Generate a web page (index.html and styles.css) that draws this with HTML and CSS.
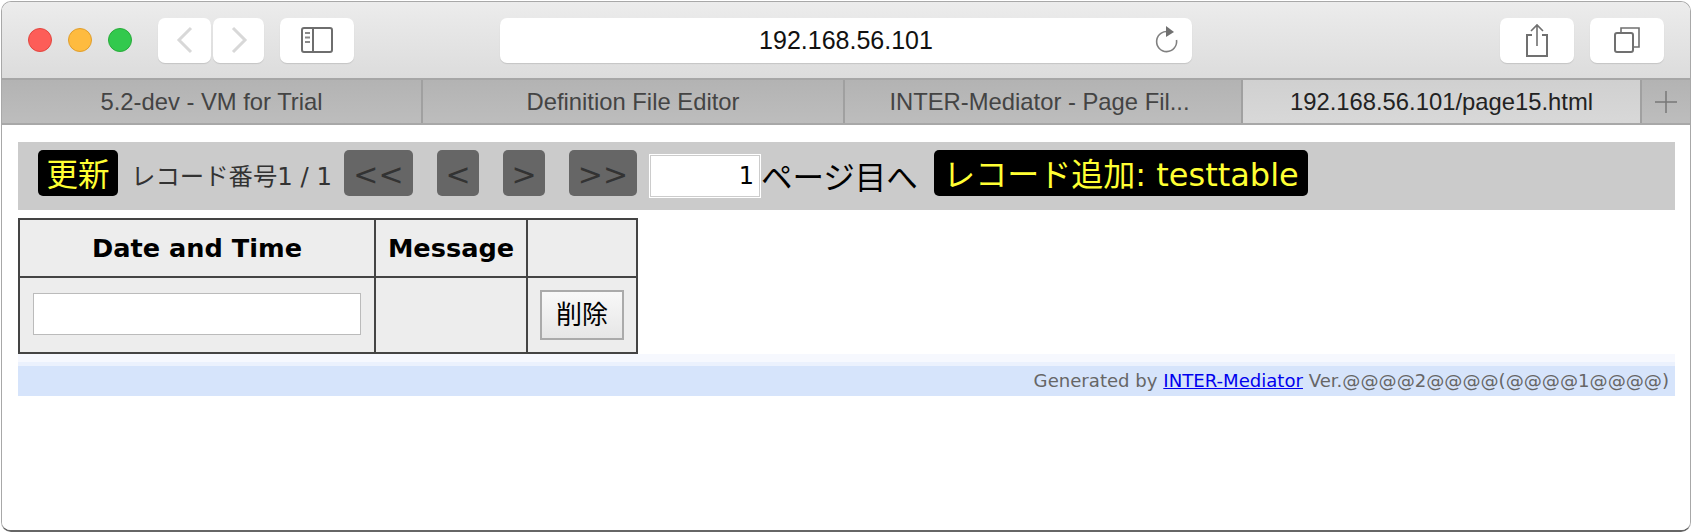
FILE: index.html
```html
<!DOCTYPE html>
<html lang="ja">

<head>
    <meta charset="UTF-8">
    <meta name="viewport" content="width=device-width, initial-scale=1.0">
    <title>192.168.56.101/page15.html</title>
    <link rel="stylesheet" href="styles.css">
</head>

<body>
    <div class="window">
        <div class="toolbar">
            <div class="lights">
                <span class="light red"></span>
                <span class="light yellow"></span>
                <span class="light green"></span>
            </div>
            <div class="tool back">
                <svg width="24" height="28" viewBox="0 0 24 28"><path d="M18 2 L6 14 L18 26" fill="none" stroke="#d8d8d8" stroke-width="3"/></svg>
            </div>
            <div class="tool forward">
                <svg width="24" height="28" viewBox="0 0 24 28"><path d="M6 2 L18 14 L6 26" fill="none" stroke="#d8d8d8" stroke-width="3"/></svg>
            </div>
            <div class="tool sidebar">
                <svg width="32" height="26" viewBox="0 0 32 26">
                    <rect x="1" y="1" width="30" height="24" rx="2" fill="none" stroke="#6e6e6e" stroke-width="2"/>
                    <path d="M12 1 V25" stroke="#6e6e6e" stroke-width="2"/>
                    <path d="M4 6 H9 M4 10.500 H9 M4 15 H9" stroke="#8a8a8a" stroke-width="2"/>
                </svg>
            </div>
            <div class="address">
                <span class="url">192.168.56.101</span>
                <svg class="reload" width="24" height="30" viewBox="0 0 24 30">
                    <path d="M14.500 7 A10 10 0 1 0 21.500 15" fill="none" stroke="#808080" stroke-width="1.600"/>
                    <path d="M11 1 L19 7 L11 12 Z" fill="#707070"/>
                </svg>
            </div>
            <div class="tool share">
                <svg width="24" height="34" viewBox="0 0 24 34">
                    <path d="M7 12 H2 V33 H22 V12 H17" fill="none" stroke="#707070" stroke-width="2"/>
                    <path d="M12 23 V2 M6 8 L12 2 L18 8" fill="none" stroke="#707070" stroke-width="1.600"/>
                </svg>
            </div>
            <div class="tool tabs-btn">
                <svg width="26" height="26" viewBox="0 0 26 26">
                    <rect x="1" y="6" width="18" height="19" rx="2" fill="none" stroke="#707070" stroke-width="2"/>
                    <path d="M7 6 V1 H25 V20 H19" fill="none" stroke="#707070" stroke-width="1.600"/>
                </svg>
            </div>
        </div>

        <div class="tabbar">
            <div class="tab">5.2-dev - VM for Trial</div>
            <div class="tab">Definition File Editor</div>
            <div class="tab tab-long">INTER-Mediator - Page Fil...</div>
            <div class="tab active">192.168.56.101/page15.html</div>
            <div class="tab plus">
                <svg width="22" height="22" viewBox="0 0 22 22"><path d="M11 0 V22 M0 11 H22" stroke="#777" stroke-width="1.500"/></svg>
            </div>
        </div>

        <div class="content">
            <div class="navi">
                <span class="btn-black update">更新</span>
                <span class="record">レコード番号1 / 1</span>
                <span class="btn-page first">&lt;&lt;</span>
                <span class="btn-page prev">&lt;</span>
                <span class="btn-page next">&gt;</span>
                <span class="btn-page last">&gt;&gt;</span>
                <input class="page-input" type="text" value="1">
                <span class="page-label">ページ目へ</span>
                <span class="btn-black add">レコード追加: testtable</span>
            </div>

            <table class="records">
                <thead>
                    <tr>
                        <th class="col-date">Date and Time</th>
                        <th class="col-message">Message</th>
                        <th class="col-action"></th>
                    </tr>
                </thead>
                <tbody>
                    <tr>
                        <td><input class="date-input" type="text"></td>
                        <td></td>
                        <td><button class="delete">削除</button></td>
                    </tr>
                </tbody>
            </table>

            <div class="footer">Generated by <a href="#">INTER-Mediator</a> Ver.@@@@2@@@@(@@@@1@@@@)</div>
        </div>
    </div>
</body>

</html>
```

FILE: styles.css
```css
* {
    margin: 0;
    padding: 0;
    box-sizing: border-box;
}

body {
    background-color: #fff;
    overflow: hidden;
}

.window {
    display: flex;
    flex-direction: column;
    width: 1690px;
    height: 531px;
    margin: 1px 0 0 1px;
    border: 1px solid #a8a8a8;
    border-bottom: 2px solid #666;
    border-radius: 10px;
    overflow: hidden;
    font-family: "Liberation Sans", sans-serif;
}

/* Browser chrome */
.toolbar {
    display: flex;
    align-items: center;
    flex: none;
    height: 78px;
    padding: 0 26px 0 26px;
    background: linear-gradient(#ececec, #dcdcdc);
    border-bottom: 2px solid #a6a6a6;
}

.lights {
    display: flex;
    gap: 16px;
    margin-right: 26px;
}

.light {
    width: 24px;
    height: 24px;
    border-radius: 50%;
}

.red {
    background-color: #fd5d58;
    border: 1px solid #e2463f;
}

.yellow {
    background-color: #febb3f;
    border: 1px solid #e09e2d;
}

.green {
    background-color: #32c94d;
    border: 1px solid #28ab3a;
}

.tool {
    display: flex;
    align-items: center;
    justify-content: center;
    height: 45px;
    background-color: #fff;
    border-radius: 7px;
    box-shadow: 0 1px 1px rgba(0, 0, 0, 0.12);
}

.back {
    width: 53px;
}

.forward {
    width: 51px;
    margin-left: 2px;
}

.sidebar {
    width: 74px;
    margin-left: 16px;
}

.address {
    display: flex;
    align-items: center;
    justify-content: center;
    position: relative;
    width: 692px;
    height: 45px;
    margin-left: 146px;
    background-color: #fff;
    border-radius: 7px;
    box-shadow: 0 1px 1px rgba(0, 0, 0, 0.12);
}

.url {
    font-size: 25px;
    color: #111;
}

.reload {
    position: absolute;
    right: 13px;
    top: 7px;
}

.share {
    width: 74px;
    margin-left: 308px;
}

.tabs-btn {
    width: 74px;
    margin-left: 16px;
}

.tabbar {
    display: grid;
    grid-template-columns: 421px 422px 398px 399px 1fr;
    flex: none;
    height: 45px;
    border-bottom: 2px solid #a8a8a8;
}

.tab {
    display: flex;
    align-items: center;
    justify-content: center;
    background: linear-gradient(#b3b3b3, #bdbdbd);
    border-right: 2px solid #a0a0a0;
    color: #444;
    font-size: 23.800px;
}

.tab-long {
    padding-right: 7px;
}

.active {
    background: linear-gradient(#d0d0d0, #d8d8d8);
    color: #222;
}

.plus {
    border-right: none;
}

/* Page */
.content {
    flex: 1;
    padding: 17px 15px 0 16px;
    background-color: #fff;
    font-family: "DejaVu Sans", "Noto Sans CJK JP", sans-serif;
}

.navi {
    display: flex;
    align-items: flex-start;
    height: 68px;
    padding: 8px 0 0 20px;
    background-color: #cbcbcb;
}

.btn-black {
    height: 46px;
    line-height: 50px;
    background-color: #000;
    color: #ff3;
    border-radius: 5px;
    font-size: 31.500px;
    text-align: center;
    white-space: nowrap;
}

.update {
    width: 80px;
}

.record {
    width: 203px;
    margin-left: 13px;
    font-size: 24.400px;
    line-height: 54px;
    color: #333;
    white-space: nowrap;
}

.btn-page {
    height: 46px;
    line-height: 50px;
    background-color: #666;
    color: #333;
    border-radius: 5px;
    font-size: 30px;
    text-align: center;
}

.first {
    width: 69px;
    margin-left: 10px;
}

.prev {
    width: 42px;
    margin-left: 24px;
}

.next {
    width: 42px;
    margin-left: 24px;
}

.last {
    width: 68px;
    margin-left: 24px;
}

.page-input {
    width: 112px;
    height: 44px;
    margin: 4px 0 0 12px;
    padding-right: 6px;
    border: 1px solid #fff;
    outline: none;
    background-color: #fff;
    font-family: "DejaVu Sans", sans-serif;
    font-size: 24px;
    text-align: right;
    box-shadow: inset 0 0 0 1px #ccc;
}

.page-label {
    width: 173px;
    font-size: 31.500px;
    line-height: 56px;
    color: #000;
    white-space: nowrap;
}

.add {
    width: 374px;
    font-size: 32px;
}

.records {
    width: 620px;
    margin-top: 8px;
    border-collapse: collapse;
    border: 2px solid #444;
    background-color: #ededed;
}

.records th,
.records td {
    border: 2px solid #444;
    text-align: center;
}

.records th {
    height: 58px;
    font-size: 25.600px;
    color: #000;
}

.records td {
    height: 76px;
}

.col-date {
    width: 356px;
}

.col-message {
    width: 152px;
}

.date-input {
    display: block;
    width: 328px;
    height: 42px;
    margin: -3px auto 0;
    border: 1px solid #bbb;
    outline: none;
    background-color: #fff;
}

.delete {
    width: 84px;
    height: 50px;
    padding-bottom: 4px;
    border: 2px solid #aaa;
    background: linear-gradient(#f8f8f8, #e6e6e6);
    color: #000;
    font-family: "Noto Sans CJK JP", sans-serif;
    font-size: 26px;
    line-height: 1;
}

.footer {
    height: 42px;
    padding: 16px 6px 0 0;
    background: linear-gradient(#f6f8fe 0, #f6f8fe 8px, #ebf1fd 8px, #ebf1fd 12px, #d6e4fb 12px);
    color: #666;
    font-size: 18.100px;
    line-height: 22px;
    text-align: right;
}

.footer a {
    color: #00e;
}
```
